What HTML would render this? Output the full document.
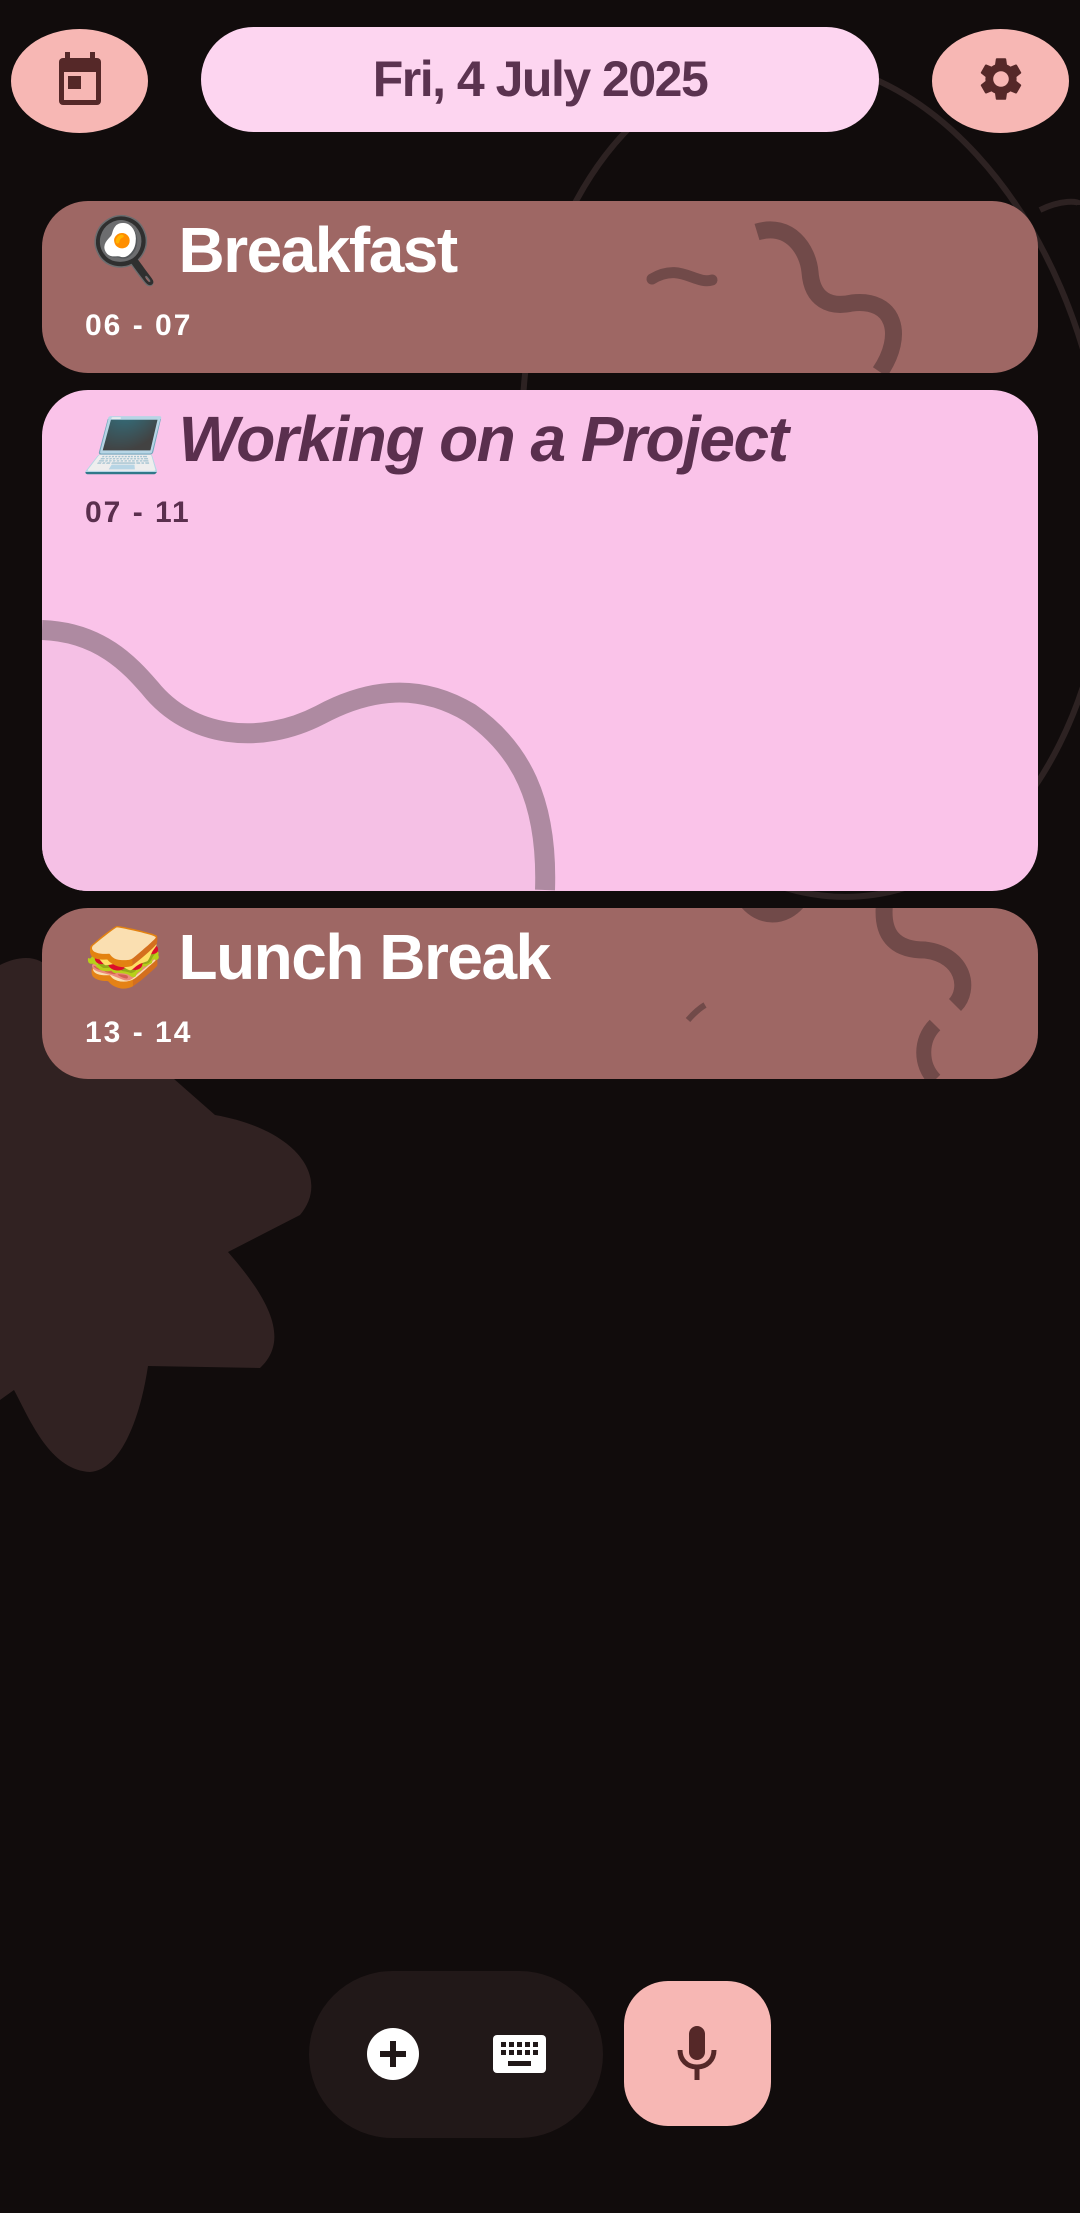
<!DOCTYPE html>
<html><head><meta charset="utf-8"><style>
*{margin:0;padding:0;box-sizing:border-box}
body{width:1080px;height:2213px;background:#110c0c;overflow:hidden;position:relative;font-family:"Liberation Sans","Noto Color Emoji",sans-serif}
.abs{position:absolute}
.btn{position:absolute;background:#f7b7b4;border-radius:50%}
.card{position:absolute;left:42px;width:996px;border-radius:46px;overflow:hidden}
.title{position:absolute;left:42px;font-weight:bold;white-space:nowrap;letter-spacing:-1.5px}
.time{position:absolute;left:43px;font-weight:bold;font-size:30px;letter-spacing:2px}
</style></head><body>
<svg class="abs" style="left:0;top:0" width="1080" height="2213">
<ellipse cx="815" cy="478" rx="290" ry="421" transform="rotate(-8 815 478)" fill="none" stroke="#2d2222" stroke-width="6"/>
<path d="M1040,210 C1060,200 1080,200 1080,205" fill="none" stroke="#2d2222" stroke-width="6"/>
<path d="M0,965 C20,955 40,955 50,970 L215,1115 C300,1130 330,1180 300,1215 L228,1252 C270,1300 290,1340 260,1368 L148,1366 C140,1420 120,1470 90,1472 C50,1470 30,1420 14,1390 L0,1400 Z" fill="#312222"/>
</svg>
<div class="btn" style="left:11px;top:29px;width:137px;height:104px"></div>
<svg class="abs" style="left:56px;top:52px" width="48" height="54" viewBox="0 0 48 54">
<rect x="9" y="0" width="5" height="8" fill="#552828"/><rect x="34" y="0" width="5" height="8" fill="#552828"/>
<rect x="3" y="6" width="42" height="47" rx="4" fill="#552828"/>
<rect x="8" y="20" width="32" height="28" fill="#f7b7b4"/>
<rect x="12" y="24" width="13" height="13" fill="#552828"/>
</svg>
<div class="abs" style="left:201px;top:27px;width:678px;height:105px;border-radius:53px;background:#fdd5f0;text-align:center;line-height:105px;font-size:50px;font-weight:bold;color:#5b3350;letter-spacing:-1.5px">Fri, 4 July 2025</div>
<div class="btn" style="left:932px;top:29px;width:137px;height:104px"></div>
<svg class="abs" style="left:975px;top:53px" width="52" height="52" viewBox="0 0 24 24"><path fill="#552828" d="M19.14 12.94c.04-.3.06-.61.06-.94 0-.32-.02-.64-.07-.94l2.030-1.58c.18-.14.23-.41.12-.61l-1.92-3.32c-.12-.22-.37-.29-.59-.22l-2.39.96c-.5-.38-1.030-.7-1.62-.94l-.36-2.54c-.04-.24-.24-.41-.48-.41h-3.84c-.24 0-.43.17-.47.41l-.36 2.54c-.59.24-1.13.57-1.62.94l-2.39-.96c-.22-.08-.47 0-.59.22L2.740 8.870c-.12.21-.08.47.12.61l2.030 1.58c-.05.3-.09.63-.09.94s.02.64.07.94l-2.030 1.58c-.18.14-.23.41-.12.61l1.92 3.32c.12.22.37.29.59.22l2.39-.96c.5.38 1.030.7 1.62.94l.36 2.54c.05.24.24.41.48.41h3.84c.24 0 .44-.17.47-.41l.36-2.54c.59-.24 1.13-.56 1.62-.94l2.39.96c.22.08.47 0 .59-.22l1.92-3.32c.12-.22.07-.47-.12-.61l-2.010-1.58zM12 15.6c-1.98 0-3.6-1.62-3.6-3.6s1.62-3.6 3.6-3.6 3.6 1.62 3.6 3.6-1.62 3.6-3.6 3.6z"/></svg>

<div class="card" style="top:201px;height:172px;background:#9e6764">
<svg class="abs" style="left:-42px;top:-201px" width="1080" height="400">
<path d="M652,279 C680,262 695,285 712,280" fill="none" stroke="#714a49" stroke-width="11" stroke-linecap="round"/>
<path d="M757,232 C790,222 808,250 810,272 C812,300 830,308 852,303 C895,298 905,335 880,372" fill="none" stroke="#714a49" stroke-width="17"/>
</svg>
<div class="title" style="top:12px;font-size:64px;color:#fff">🍳 Breakfast</div>
<div class="time" style="top:108px;color:#fff">06 - 07</div>
</div>

<div class="card" style="top:390px;height:501px;background:#fac3e9">
<svg class="abs" style="left:-42px;top:-390px" width="1080" height="900">
<path d="M42,632 C100,632 130,665 150,690 C190,740 260,748 320,717 C370,690 420,685 470,715 C520,750 545,800 540,900 L42,900 Z" fill="#f5c0e5"/>
<path d="M42,630 C100,632 130,665 150,688 C190,738 260,746 320,715 C370,688 420,683 470,713 C520,748 548,800 545,890" fill="none" stroke="#ae8aa1" stroke-width="20"/>
</svg>
<div class="title" style="top:12px;font-size:64px;color:#5a2f4e;font-style:italic">💻 Working on a Project</div>
<div class="time" style="top:106px;color:#5a2f4e">07 - 11</div>
</div>

<div class="card" style="top:908px;height:171px;background:#9e6764">
<svg class="abs" style="left:-42px;top:-908px" width="1080" height="1100">
<path d="M745,900 C760,920 785,920 800,900" fill="none" stroke="#714a49" stroke-width="15"/>
<path d="M885,900 C880,935 895,950 925,950 C965,955 970,990 955,1005" fill="none" stroke="#714a49" stroke-width="17"/>
<path d="M935,1025 C920,1040 920,1065 935,1080" fill="none" stroke="#714a49" stroke-width="15"/>
<path d="M688,1020 C695,1012 700,1008 705,1005" fill="none" stroke="#714a49" stroke-width="6"/>
</svg>
<div class="title" style="top:12px;font-size:64px;color:#fff">🥪 Lunch Break</div>
<div class="time" style="top:108px;color:#fff">13 - 14</div>
</div>

<div class="abs" style="left:309px;top:1971px;width:294px;height:167px;border-radius:84px;background:#211818"></div>
<svg class="abs" style="left:367px;top:2028px" width="52" height="52" viewBox="0 0 52 52"><circle cx="26" cy="26" r="26" fill="#fff"/><rect x="13" y="23" width="26" height="6" fill="#211818"/><rect x="23" y="13" width="6" height="26" fill="#211818"/></svg>
<svg class="abs" style="left:493px;top:2035px" width="53" height="38" viewBox="0 0 53 38"><rect width="53" height="38" rx="4" fill="#fff"/>
<g fill="#211818"><rect x="8" y="7" width="5" height="5"/><rect x="16" y="7" width="5" height="5"/><rect x="24" y="7" width="5" height="5"/><rect x="32" y="7" width="5" height="5"/><rect x="40" y="7" width="5" height="5"/>
<rect x="8" y="15" width="5" height="5"/><rect x="16" y="15" width="5" height="5"/><rect x="24" y="15" width="5" height="5"/><rect x="32" y="15" width="5" height="5"/><rect x="40" y="15" width="5" height="5"/>
<rect x="15" y="26" width="23" height="5"/></g></svg>
<div class="abs" style="left:624px;top:1981px;width:147px;height:145px;border-radius:44px;background:#f7b7b4"></div>
<svg class="abs" style="left:677px;top:2026px" width="40" height="54" viewBox="0 0 40 54"><rect x="12" y="0" width="16" height="34" rx="8" fill="#552828"/><path d="M3,24 C3,34 10,41 20,41 C30,41 37,34 37,24" fill="none" stroke="#552828" stroke-width="5"/><rect x="17.5" y="40" width="5" height="14" fill="#552828"/></svg>
</body></html>
